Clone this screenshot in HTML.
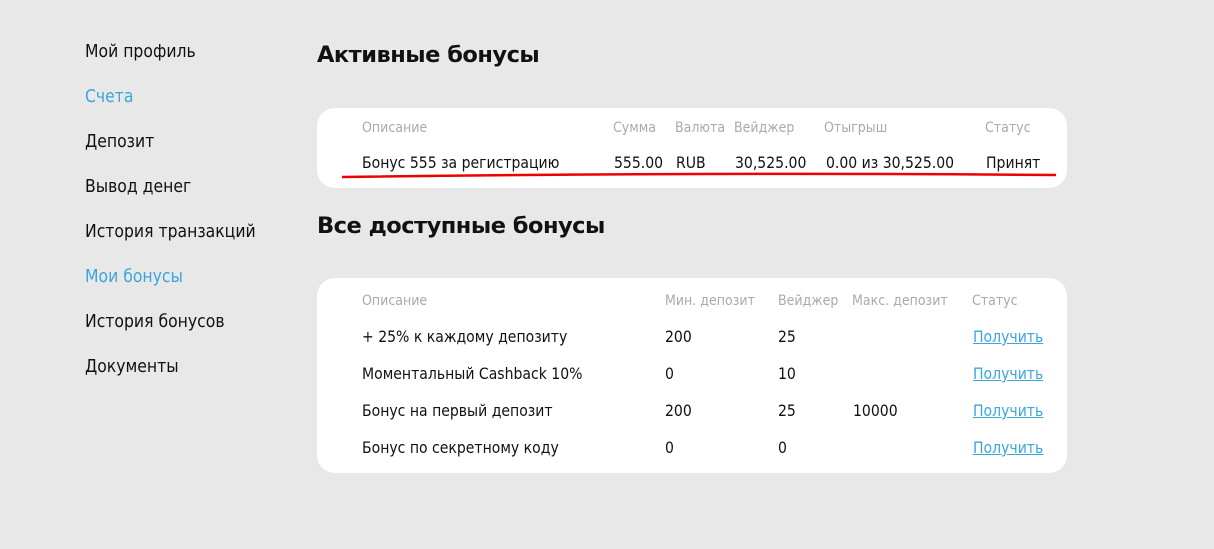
<!DOCTYPE html>
<html><head><meta charset="utf-8"><style>
body{margin:0;width:1214px;height:549px;background:#e8e8e8;font-family:"DejaVu Sans Condensed","Liberation Sans",sans-serif;position:relative;overflow:hidden;color:#111}
.a{position:absolute;white-space:nowrap}
.nav{font-size:17.4px;left:85px}
.blue{color:#3aa6dc}
h1{position:absolute;margin:0;font-size:22.5px;font-weight:bold;left:317px;font-family:"DejaVu Sans","Liberation Sans",sans-serif;letter-spacing:-0.5px}
.card{position:absolute;background:#fff;border-radius:18px;left:317px;width:750px}
.h{font-size:14px;color:#aaa}
.t{font-size:15.6px}
.l{font-size:15.6px;color:#3aa6dc;text-decoration:underline}
</style></head><body>
<div class="a nav" style="top:42px">Мой профиль</div>
<div class="a nav blue" style="top:87px">Счета</div>
<div class="a nav" style="top:132px">Депозит</div>
<div class="a nav" style="top:177px">Вывод денег</div>
<div class="a nav" style="top:222px">История транзакций</div>
<div class="a nav blue" style="top:267px">Мои бонусы</div>
<div class="a nav" style="top:312px">История бонусов</div>
<div class="a nav" style="top:357px">Документы</div>

<h1 style="top:42px">Активные бонусы</h1>
<div class="card" style="top:108px;height:80px"></div>
<div class="a h" style="left:362px;top:120px">Описание</div>
<div class="a h" style="left:613px;top:120px">Сумма</div>
<div class="a h" style="left:675px;top:120px">Валюта</div>
<div class="a h" style="left:734px;top:120px">Вейджер</div>
<div class="a h" style="left:824px;top:120px">Отыгрыш</div>
<div class="a h" style="left:985px;top:120px">Статус</div>
<div class="a t" style="left:362px;top:154px">Бонус 555 за регистрацию</div>
<div class="a t" style="left:614px;top:154px">555.00</div>
<div class="a t" style="left:676px;top:154px">RUB</div>
<div class="a t" style="left:735px;top:154px">30,525.00</div>
<div class="a t" style="left:826px;top:154px">0.00 из 30,525.00</div>
<div class="a t" style="left:986px;top:154px">Принят</div>
<svg class="a" style="left:0;top:0" width="1214" height="549"><path d="M342 177 Q700 172 1056 175" stroke="#e00" stroke-width="2.5" fill="none"/></svg>

<h1 style="top:213px">Все доступные бонусы</h1>
<div class="card" style="top:278px;height:195px"></div>
<div class="a h" style="left:362px;top:293px">Описание</div>
<div class="a h" style="left:665px;top:293px">Мин. депозит</div>
<div class="a h" style="left:778px;top:293px">Вейджер</div>
<div class="a h" style="left:852px;top:293px">Макс. депозит</div>
<div class="a h" style="left:972px;top:293px">Статус</div>

<div class="a t" style="left:362px;top:328px">+ 25% к каждому депозиту</div>
<div class="a t" style="left:665px;top:328px">200</div>
<div class="a t" style="left:778px;top:328px">25</div>
<div class="a l" style="left:973px;top:328px">Получить</div>

<div class="a t" style="left:362px;top:365px">Моментальный Cashback 10%</div>
<div class="a t" style="left:665px;top:365px">0</div>
<div class="a t" style="left:778px;top:365px">10</div>
<div class="a l" style="left:973px;top:365px">Получить</div>

<div class="a t" style="left:362px;top:402px">Бонус на первый депозит</div>
<div class="a t" style="left:665px;top:402px">200</div>
<div class="a t" style="left:778px;top:402px">25</div>
<div class="a t" style="left:853px;top:402px">10000</div>
<div class="a l" style="left:973px;top:402px">Получить</div>

<div class="a t" style="left:362px;top:439px">Бонус по секретному коду</div>
<div class="a t" style="left:665px;top:439px">0</div>
<div class="a t" style="left:778px;top:439px">0</div>
<div class="a l" style="left:973px;top:439px">Получить</div>
</body></html>
